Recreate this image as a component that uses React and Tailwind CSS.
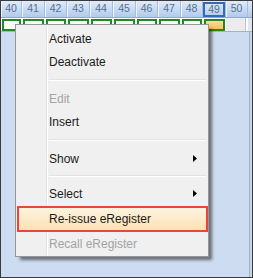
import React from 'react'

const cols = [
  { n: '40', w: 'w-[21px]' },
  { n: '41', w: 'w-[23px]' },
  { n: '42', w: 'w-[22px]' },
  { n: '43', w: 'w-[23px]' },
  { n: '44', w: 'w-[23px]' },
  { n: '45', w: 'w-[23px]' },
  { n: '46', w: 'w-[22px]' },
  { n: '47', w: 'w-[23px]' },
  { n: '48', w: 'w-[22px]' },
  { n: '49', w: 'w-[23px]', active: true },
  { n: '50', w: 'w-[22px]', empty: true },
]

const menu = [
  { label: 'Activate' },
  { label: 'Deactivate' },
  { sep: 'h-[14px]' },
  { label: 'Edit', disabled: true },
  { label: 'Insert' },
  { sep: 'h-[14px]' },
  { label: 'Show', sub: true },
  { sep: 'h-[12px]' },
  { label: 'Select', sub: true },
  { label: 'Re-issue eRegister', hot: true },
  { label: 'Recall eRegister', disabled: true },
]

function Arrow() {
  return (
    <svg width="4" height="7" viewBox="0 0 4 7" className="ml-auto mr-[11px]">
      <polygon points="0,0 4,3.5 0,7" fill="#000" />
    </svg>
  )
}

function Gutter() {
  return (
    <>
      <span className="w-[31px] self-stretch border-r border-[#e2e3e3] shrink-0" />
      <span className="w-px self-stretch bg-white shrink-0" />
    </>
  )
}

function MenuRow({ item }) {
  if (item.sep) {
    return (
      <div className={`flex ${item.sep}`}>
        <Gutter />
        <div className="flex-1 flex flex-col justify-center pl-[1px] pr-[2px]">
          <div className="h-px bg-[#e2e3e3]" />
          <div className="h-px bg-white" />
        </div>
      </div>
    )
  }

  if (item.hot) {
    return (
      <div className="ml-[1px] mt-[1px] h-[26px] border-2 border-[#e8453c] bg-gradient-to-b from-[#fdf3df] to-[#fbe2b2] flex items-center pl-[30px] text-[#1b1b1b]">
        {item.label}
      </div>
    )
  }

  return (
    <div className="flex h-[23px] items-center">
      <Gutter />
      <span className={`pl-[1px] ${item.disabled ? 'text-[#a3a3a3]' : 'text-[#1b1b1b]'}`}>
        {item.label}
      </span>
      {item.sub && <Arrow />}
    </div>
  )
}

export default function App() {
  return (
    <div className="w-[253px] h-[278px] border border-[#3a3a3a] bg-[#cddcf0] relative overflow-hidden font-['Liberation_Sans',Arial,sans-serif] flex flex-col">
      {/* header numbers */}
      <div className="flex h-[17px] border-b border-[#8fa8cf] bg-gradient-to-b from-[#e1ebf8] via-[#c9dbf2] to-[#b3caeb]">
        {cols.map((c) => (
          <div
            key={c.n}
            className={`${c.w} shrink-0 flex items-center justify-center border-r border-[#a4bde0] shadow-[inset_1px_0_0_#eef4fc] text-[10.5px] text-[#566f94]`}
          >
            {c.active ? (
              <span className="w-full h-[15px] mt-[1px] border-2 border-[#3567be] flex items-center justify-center">
                {c.n}
              </span>
            ) : (
              c.n
            )}
          </div>
        ))}
        <div className="flex-1" />
      </div>

      {/* day row */}
      <div className="flex h-[14px] bg-white border-b border-[#9db3d6]">
        {cols.map((c) => (
          <div key={c.n} className={`${c.w} shrink-0 flex items-start pt-[1px] px-[1px]`}>
            {c.empty ? (
              <div className="w-full h-[13px] -mt-[1px] -mx-[1px] bg-[#ececec] border-r border-[#b9c4d3]" />
            ) : (
              <div
                className={`w-full h-[12px] border-2 border-[#23891f] ${
                  c.active ? 'bg-gradient-to-b from-[#fddc92] to-[#f7c15b]' : 'bg-white'
                }`}
              />
            )}
          </div>
        ))}
        <div className="flex-1 bg-[#dfe6ef]" />
      </div>

      {/* empty area */}
      <div className="flex-1 flex">
        <div className="flex-1" />
        <div className="w-[3px] border-l border-[#9fb2cc] bg-[#c4d4eb]" />
      </div>

      {/* context menu */}
      <div className="absolute left-[14px] top-[23px] w-[194px] bg-[#f0f0f0] border border-[#979797] pt-[2px] pb-[1px] text-[12px] shadow-[4px_4px_3px_-1px_rgba(0,0,0,0.5)]">
        {menu.map((m, i) => (
          <MenuRow key={i} item={m} />
        ))}
      </div>
    </div>
  )
}
